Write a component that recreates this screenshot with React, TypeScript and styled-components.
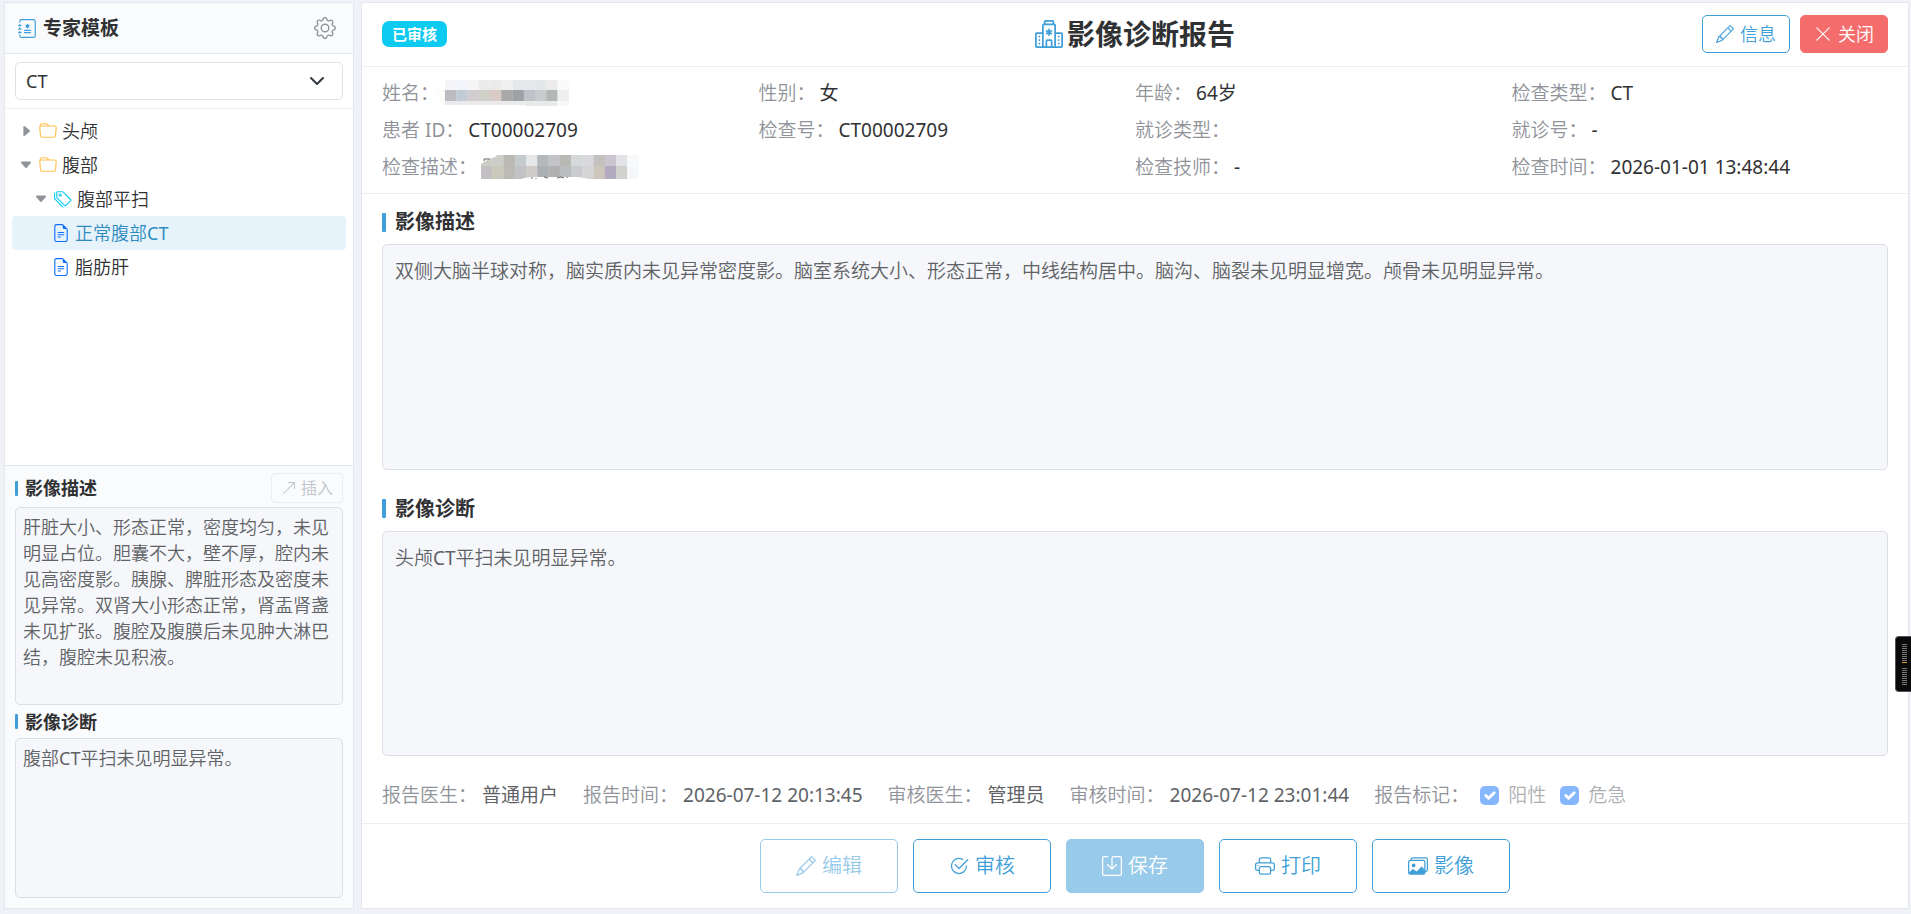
import React from "react";
import styled, { createGlobalStyle, css } from "styled-components";
import {
  BsArrowUpRight,
  BsCaretDownFill,
  BsCaretRightFill,
  BsCheck2Circle,
  BsFileEarmarkText,
  BsFolder,
  BsGear,
  BsHospital,
  BsImages,
  BsJournalMedical,
  BsPencil,
  BsPrinter,
  BsSave,
  BsTags,
  BsXLg,
} from "react-icons/bs";

const color = {
  primary: "#409fd9",
  primaryDark: "#2e8bc0",
  primaryMuted: "#98cae9",
  danger: "#f56c6c",
  text: "#303133",
  textRegular: "#606266",
  textMuted: "#909399",
  border: "#dcdfe6",
  line: "#ebeef5",
  page: "#f0f2f7",
  soft: "#fafbfd",
  field: "#f5f7fa",
};

const font = {
  body: `"Noto Sans", "Noto Sans CJK SC DemiLight", "Noto Sans CJK SC", sans-serif`,
  strong: `"Noto Sans", "Noto Sans CJK SC", sans-serif`,
};

const GlobalStyle = createGlobalStyle`
  *, *::before, *::after { box-sizing: border-box; }
  body {
    margin: 0;
    background: ${color.page};
    color: ${color.text};
    font-family: ${font.body};
    font-size: 18px;
    font-weight: 400;
    line-height: 26px;
  }
  button, select, textarea, input { font: inherit; }
  svg { flex: none; }
`;

const Page = styled.div`
  display: grid;
  grid-template-columns: 350px minmax(0, 1fr);
  gap: 7px;
  min-height: 100vh;
  padding: 2px 2px 5px 4px;
`;

const Panel = styled.div`
  display: flex;
  flex-direction: column;
  min-width: 0;
  background: #fff;
  border: 1px solid #e4e7f0;
`;

const SideHeader = styled.header`
  display: flex;
  align-items: center;
  justify-content: space-between;
  height: 51px;
  padding: 0 17px 0 13px;
  background: ${color.soft};
  border-bottom: 1px solid #e4e7ed;
`;

const SideTitle = styled.h2`
  display: flex;
  align-items: center;
  gap: 6px;
  margin: 0;
  font-family: ${font.strong};
  font-size: 19px;
  font-weight: 700;
  svg { color: ${color.primary}; }
`;

const IconButton = styled.button`
  display: flex;
  padding: 0;
  border: 0;
  background: none;
  color: ${color.textMuted};
`;

const FilterBar = styled.div`
  padding: 8px 10px;
  border-bottom: 1px solid ${color.line};
`;

const ModalitySelect = styled.select`
  display: block;
  width: 100%;
  height: 38px;
  padding: 0 10px;
  border: 1px solid #dee2e6;
  border-radius: 5px;
  color: ${color.text};
  appearance: none;
  background: #fff
    url("data:image/svg+xml,%3csvg xmlns='http://www.w3.org/2000/svg' viewBox='0 0 16 16'%3e%3cpath fill='none' stroke='%23343a40' stroke-linecap='round' stroke-linejoin='round' stroke-width='2' d='m2 5 6 6 6-6'/%3e%3c/svg%3e")
    no-repeat right 17px center / 16px 16px;
`;

const Tree = styled.ul`
  flex: 1;
  margin: 0;
  padding: 5px 7px;
  list-style: none;
`;

const TreeRow = styled.li<{ $indent: number; $active?: boolean }>`
  display: flex;
  align-items: center;
  height: 34px;
  padding-left: ${(p) => p.$indent}px;
  border-radius: 4px;
  ${(p) =>
    p.$active &&
    css`
      background: #e6f3fb;
      color: ${color.primaryDark};
    `}
`;

const Caret = styled.span`
  display: flex;
  width: 20px;
  color: ${color.textMuted};
`;

const TreeIcon = styled.span<{ $tint: string }>`
  display: flex;
  margin-right: 5px;
  color: ${(p) => p.$tint};
`;

const Preview = styled.section`
  padding: 7px 10px 10px;
  background: ${color.soft};
  border-top: 1px solid #e4e7ed;
`;

const PreviewHead = styled.div<{ $compact?: boolean }>`
  display: flex;
  align-items: center;
  justify-content: space-between;
  height: ${(p) => (p.$compact ? 33 : 34)}px;
  padding-bottom: ${(p) => (p.$compact ? 0 : 4)}px;
`;

const SectionTitle = styled.label<{ $large?: boolean }>`
  display: flex;
  align-items: center;
  gap: ${(p) => (p.$large ? 9 : 7)}px;
  font-family: ${font.strong};
  font-size: ${(p) => (p.$large ? 20 : 18)}px;
  font-weight: 700;
  &::before {
    content: "";
    width: ${(p) => (p.$large ? 4 : 3)}px;
    height: ${(p) => (p.$large ? 19 : 15)}px;
    border-radius: 1px;
    background: ${color.primary};
  }
`;

const InsertButton = styled.button`
  display: flex;
  align-items: center;
  gap: 4px;
  height: 30px;
  padding: 0 9px;
  border: 1px solid #ebedf1;
  border-radius: 4px;
  background: transparent;
  color: #c0c4cc;
  font-size: 16px;
`;

const Field = styled.textarea`
  display: block;
  width: 100%;
  margin: 0;
  border: 1px solid ${color.border};
  border-radius: 5px;
  background: ${color.field};
  color: ${color.textRegular};
  resize: none;
  outline: none;
`;

const PreviewField = styled(Field)<{ $height: number }>`
  height: ${(p) => p.$height}px;
  padding: 6px 7px;
  overflow: hidden;
`;

const ReportHeader = styled.header`
  display: grid;
  grid-template-columns: 1fr auto 1fr;
  align-items: center;
  height: 64px;
  padding: 0 20px 1px;
  border-bottom: 1px solid ${color.line};
`;

const Badge = styled.span`
  justify-self: start;
  padding: 0 10px;
  border-radius: 7px;
  background: #0dcaf0;
  color: #fff;
  font-family: ${font.strong};
  font-size: 15px;
  font-weight: 700;
`;

const ReportTitle = styled.h1`
  display: flex;
  align-items: center;
  gap: 4px;
  margin: 0;
  font-family: ${font.strong};
  font-size: 28px;
  font-weight: 700;
  line-height: 40px;
  svg { color: ${color.primary}; }
`;

const HeaderActions = styled.div`
  display: flex;
  justify-content: flex-end;
  gap: 10px;
`;

const Button = styled.button<{ $variant?: "outline" | "solid" | "danger"; $large?: boolean }>`
  display: flex;
  align-items: center;
  justify-content: center;
  gap: 6px;
  height: ${(p) => (p.$large ? 54 : 38)}px;
  min-width: ${(p) => (p.$large ? 138 : 88)}px;
  padding: 0 12px;
  border: 1px solid ${color.primary};
  border-radius: 5px;
  background: #fff;
  color: ${color.primary};
  font-size: ${(p) => (p.$large ? 20 : 18)}px;
  &:disabled {
    border-color: ${color.primaryMuted};
    color: ${color.primaryMuted};
  }
  ${(p) =>
    p.$variant === "danger" &&
    css`
      border-color: ${color.danger};
      background: ${color.danger};
      color: #fff;
    `}
  ${(p) =>
    p.$variant === "solid" &&
    css`
      &:disabled {
        background: ${color.primaryMuted};
        color: #fff;
      }
    `}
`;

const InfoGrid = styled.dl`
  display: grid;
  grid-template-columns: repeat(4, minmax(0, 1fr));
  grid-auto-rows: 37px;
  align-items: center;
  margin: 0;
  padding: 7px 20px 8px;
  border-bottom: 1px solid ${color.line};
  font-size: 19px;
`;

const InfoItem = styled.div<{ $span?: number }>`
  display: flex;
  align-items: center;
  gap: 4px;
  grid-column: span ${(p) => p.$span ?? 1};
  dt { color: ${color.textMuted}; }
  dd { display: flex; margin: 0; font-family: ${font.strong}; }
  svg { overflow: visible; }
`;

const ReportBody = styled.div`
  display: flex;
  flex: 1;
  flex-direction: column;
`;

const ReportSection = styled.section`
  display: flex;
  flex: 1;
  flex-direction: column;
  padding: 12px 20px 11px;
`;

const ReportHead = styled.div`
  display: flex;
  align-items: center;
  height: 38px;
  padding-bottom: 6px;
`;

const ReportField = styled(Field)`
  flex: 1;
  min-height: 120px;
  padding: 12px;
  font-size: 19px;
  line-height: 28px;
`;

const MetaBar = styled.div`
  display: flex;
  flex-wrap: wrap;
  align-items: center;
  gap: 0 25px;
  min-height: 57px;
  padding: 0 20px;
  border-bottom: 1px solid ${color.line};
  color: ${color.textMuted};
  font-size: 19px;
`;

const MetaItem = styled.span`
  display: flex;
  align-items: center;
  gap: 5px;
`;

const MetaValue = styled.span`
  color: ${color.textRegular};
  font-family: ${font.strong};
`;

const Flags = styled.span`
  display: flex;
  gap: 14px;
  margin-left: 6px;
`;

const Flag = styled.label`
  display: flex;
  align-items: center;
  gap: 9px;
  color: #adafb3;
  input {
    width: 19px;
    height: 19px;
    margin: 0;
    border-radius: 5px;
    appearance: none;
    background: #86b6fe
      url("data:image/svg+xml,%3csvg xmlns='http://www.w3.org/2000/svg' viewBox='0 0 20 20'%3e%3cpath fill='none' stroke='%23fff' stroke-linecap='round' stroke-linejoin='round' stroke-width='3' d='m6 10 3 3 6-6'/%3e%3c/svg%3e")
      center / contain no-repeat;
  }
`;

const ActionBar = styled.footer`
  display: flex;
  justify-content: center;
  gap: 15px;
  padding: 15px 20px;
`;

const EdgeWidget = styled.aside`
  position: fixed;
  top: 636px;
  right: 0;
  display: flex;
  align-items: center;
  justify-content: center;
  width: 16px;
  height: 56px;
  padding-left: 2px;
  border: 1px solid #555;
  border-right: 0;
  border-radius: 4px 0 0 4px;
  background: #0a0a0a;
`;

/* Mosaic cells that hide patient data, one array per row. */
const nameMask = [
  ["#f5f5f7", "#f3f5fa", "#f5f5f6", "#ececec", "#eaeae8", "#f0f0f0", "#e6e7ea", "#e6e8ea", "#e3e8e9", "#ececea", "#fafafa"],
  ["#bcbcc0", "#c2ccd6", "#d0cccf", "#d0cfc8", "#d9cac5", "#a9a9a9", "#9ea1a5", "#bfc3c9", "#c8cacd", "#b3b7b7", "#efeff0"],
];
const descMask = [
  ["#cdcdc8", "#cdcdc8", "#bab9b3", "#c5cacd", "#e5e7e9", "#b4b8ba", "#c2c4c8", "#b8b8b4", "#d5d9da", "#d7d9dc", "#c4c0be", "#cac5d0", "#e1e3e6", "#f8f9fb"],
  ["#c2c0c3", "#c8c8bb", "#bcbab3", "#c3c3c6", "#d0ccc9", "#abb0b5", "#b0b0b0", "#bbbcc0", "#c9cbce", "#d5d5d6", "#cdc7bb", "#b2abbf", "#d1d1cd", "#f6f7f9"],
];

function NameMask() {
  return (
    <svg width="125" height="26" viewBox="0 0 125 26" aria-hidden="true">
      {nameMask[0].map((c, i) => (
        <rect key={i} x={2 + i * 11.25} y="0" width="11.5" height="10" fill={c} />
      ))}
      {nameMask[1].map((c, i) => (
        <rect key={i} x={2 + i * 11.25} y="10" width="11.5" height="11" fill={c} />
      ))}
      <path d="M-7 10h9v14q-8-3-9-14z" fill="#fbfbfa" />
      <rect x="2" y="21" width="82" height="4" fill="#eaeaec" />
      <rect x="83" y="21" width="31" height="5" fill="#e8eaea" />
      <rect x="114" y="21" width="12" height="5" fill="#f8f8f8" />
    </svg>
  );
}

function DescMask() {
  return (
    <svg width="158" height="24" viewBox="0 0 158 24" aria-hidden="true">
      {descMask[0].map((c, i) => (
        <rect key={i} x={i * 11.25} y="0" width="11.5" height="12" fill={c} />
      ))}
      {descMask[1].map((c, i) => (
        <rect key={i} x={i * 11.25} y="11" width="11.5" height="13" fill={c} />
      ))}
      <path d="M-1-1h18q-2 3-6 4Q2 6-1 11z" fill="#fff" />
      <path d="M37 25q8-3 14-3h45q10 1 14 3z" fill="#fff" />
      <path d="M3 6V4h6M51 24v-2M55 24v-1M63 22l4 1M76 23l4-1 3 1M86 22v1" fill="none" stroke="#666" />
    </svg>
  );
}

const info: { label: string; value: React.ReactNode; span?: number }[] = [
  { label: "姓名：", value: <NameMask /> },
  { label: "性别：", value: "女" },
  { label: "年龄：", value: "64岁" },
  { label: "检查类型：", value: "CT" },
  { label: "患者 ID：", value: "CT00002709" },
  { label: "检查号：", value: "CT00002709" },
  { label: "就诊类型：", value: "" },
  { label: "就诊号：", value: "-" },
  { label: "检查描述：", value: <DescMask />, span: 2 },
  { label: "检查技师：", value: "-" },
  { label: "检查时间：", value: "2026-01-01 13:48:44" },
];

const meta = [
  ["报告医生：", "普通用户"],
  ["报告时间：", "2026-07-12 20:13:45"],
  ["审核医生：", "管理员"],
  ["审核时间：", "2026-07-12 23:01:44"],
];

export default function App() {
  return (
    <>
      <GlobalStyle />
      <Page>
        <Panel as="aside">
          <SideHeader>
            <SideTitle>
              <BsJournalMedical size={19} />
              专家模板
            </SideTitle>
            <IconButton type="button" aria-label="设置">
              <BsGear size={22} />
            </IconButton>
          </SideHeader>
          <FilterBar>
            <ModalitySelect aria-label="检查类型" defaultValue="CT">
              <option>CT</option>
            </ModalitySelect>
          </FilterBar>
          <Tree>
            <TreeRow $indent={7}>
              <Caret><BsCaretRightFill size={14} /></Caret>
              <TreeIcon $tint="#ffc14d"><BsFolder size={18} /></TreeIcon>
              头颅
            </TreeRow>
            <TreeRow $indent={7}>
              <Caret><BsCaretDownFill size={14} /></Caret>
              <TreeIcon $tint="#ffc14d"><BsFolder size={18} /></TreeIcon>
              腹部
            </TreeRow>
            <TreeRow $indent={22}>
              <Caret><BsCaretDownFill size={14} /></Caret>
              <TreeIcon $tint="#0dcaf0"><BsTags size={18} /></TreeIcon>
              腹部平扫
            </TreeRow>
            <TreeRow $indent={40} $active>
              <TreeIcon $tint="#0d6efd"><BsFileEarmarkText size={18} /></TreeIcon>
              正常腹部CT
            </TreeRow>
            <TreeRow $indent={40}>
              <TreeIcon $tint="#0d6efd"><BsFileEarmarkText size={18} /></TreeIcon>
              脂肪肝
            </TreeRow>
          </Tree>
          <Preview>
            <PreviewHead>
              <SectionTitle htmlFor="tpl-finding">影像描述</SectionTitle>
              <InsertButton type="button" disabled>
                <BsArrowUpRight size={16} />
                插入
              </InsertButton>
            </PreviewHead>
            <PreviewField
              id="tpl-finding"
              readOnly
              $height={198}
              value="肝脏大小、形态正常，密度均匀，未见明显占位。胆囊不大，壁不厚，腔内未见高密度影。胰腺、脾脏形态及密度未见异常。双肾大小形态正常，肾盂肾盏未见扩张。腹腔及腹膜后未见肿大淋巴结，腹腔未见积液。"
            />
            <PreviewHead $compact>
              <SectionTitle htmlFor="tpl-diagnosis">影像诊断</SectionTitle>
            </PreviewHead>
            <PreviewField
              id="tpl-diagnosis"
              readOnly
              $height={160}
              value="腹部CT平扫未见明显异常。"
            />
          </Preview>
        </Panel>

        <Panel as="main">
          <ReportHeader>
            <Badge>已审核</Badge>
            <ReportTitle>
              <BsHospital size={28} />
              影像诊断报告
            </ReportTitle>
            <HeaderActions>
              <Button type="button">
                <BsPencil size={18} />
                信息
              </Button>
              <Button type="button" $variant="danger">
                <BsXLg size={18} />
                关闭
              </Button>
            </HeaderActions>
          </ReportHeader>

          <InfoGrid>
            {info.map((item) => (
              <InfoItem key={item.label} $span={item.span}>
                <dt>{item.label}</dt>
                <dd>{item.value}</dd>
              </InfoItem>
            ))}
          </InfoGrid>

          <ReportBody>
            <ReportSection>
              <ReportHead>
                <SectionTitle $large htmlFor="finding">影像描述</SectionTitle>
              </ReportHead>
              <ReportField
                id="finding"
                readOnly
                value="双侧大脑半球对称，脑实质内未见异常密度影。脑室系统大小、形态正常，中线结构居中。脑沟、脑裂未见明显增宽。颅骨未见明显异常。"
              />
            </ReportSection>
            <ReportSection>
              <ReportHead>
                <SectionTitle $large htmlFor="diagnosis">影像诊断</SectionTitle>
              </ReportHead>
              <ReportField id="diagnosis" readOnly value="头颅CT平扫未见明显异常。" />
            </ReportSection>
          </ReportBody>

          <MetaBar>
            {meta.map(([label, value]) => (
              <MetaItem key={label}>
                {label}
                <MetaValue>{value}</MetaValue>
              </MetaItem>
            ))}
            <MetaItem>
              报告标记：
              <Flags>
                <Flag>
                  <input type="checkbox" defaultChecked disabled />
                  阳性
                </Flag>
                <Flag>
                  <input type="checkbox" defaultChecked disabled />
                  危急
                </Flag>
              </Flags>
            </MetaItem>
          </MetaBar>

          <ActionBar>
            <Button type="button" $large disabled>
              <BsPencil size={20} />
              编辑
            </Button>
            <Button type="button" $large>
              <BsCheck2Circle size={20} />
              审核
            </Button>
            <Button type="button" $large $variant="solid" disabled>
              <BsSave size={20} />
              保存
            </Button>
            <Button type="button" $large>
              <BsPrinter size={20} />
              打印
            </Button>
            <Button type="button" $large>
              <BsImages size={20} />
              影像
            </Button>
          </ActionBar>
        </Panel>
      </Page>
      <EdgeWidget aria-label="音量">
        <svg width="5" height="41" viewBox="0 0 5 41" shapeRendering="crispEdges" aria-hidden="true">
          {Array.from({ length: 10 }, (_, i) => (
            <rect key={i} x="0" y={i * 2} width="5" height="1" fill={i === 9 ? "#e59a1c" : "#777"} />
          ))}
          {Array.from({ length: 9 }, (_, i) => (
            <rect key={i} x="0" y={24 + i * 2} width="5" height="1" fill="#777" />
          ))}
        </svg>
      </EdgeWidget>
    </>
  );
}
